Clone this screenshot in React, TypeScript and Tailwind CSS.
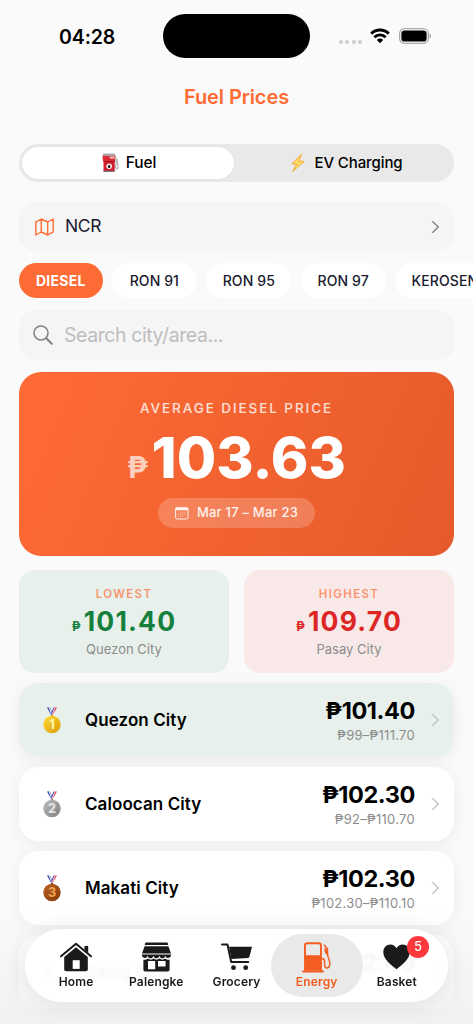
import type { ReactNode } from 'react';

interface City {
  rank: number;
  name: string;
  price: string;
  range: string;
}

const FUELS = ['DIESEL', 'RON 91', 'RON 95', 'RON 97', 'KEROSENE'];

const CITIES: City[] = [
  { rank: 1, name: 'Quezon City', price: '₱101.40', range: '₱99–₱111.70' },
  { rank: 2, name: 'Caloocan City', price: '₱102.30', range: '₱92–₱110.70' },
  { rank: 3, name: 'Makati City', price: '₱102.30', range: '₱102.30–₱110.10' },
  { rank: 4, name: 'Pasig City', price: '₱102.40', range: '' },
];

const MEDALS = [
  { light: '#ffdf3c', dark: '#d89400', digit: '#fff3a8' },
  { light: '#bcbcbc', dark: '#7c7c7c', digit: '#e2e2e2' },
  { light: '#bd6423', dark: '#7c3409', digit: '#f0a050' },
];

const StatusBar = () => (
  <div className="flex h-[72px] shrink-0 items-start">
    <div className="w-[163px] pl-[59px] pt-[23px] text-[19.5px] font-semibold leading-7 tracking-[-0.1px] text-black">
      04:28
    </div>
    <div className="mt-[14px] h-[44px] w-[147px] rounded-full bg-black" />
    <div className="ml-[29px] mt-[28px] flex items-start">
      <div className="mt-[12px] flex gap-[2.3px]">
        {[0, 1, 2, 3].map((dot) => (
          <span key={dot} className="h-1 w-1 rounded-full bg-[#cccccc]" />
        ))}
      </div>
      <svg className="ml-[8px]" width="20" height="16" viewBox="0 0 20 16">
        <g fill="none" stroke="#000" strokeWidth="2.9">
          <path d="M1.2 5.6a12.6 12.6 0 0 1 17.6 0" />
          <path d="M4.4 9.2a8 8 0 0 1 11.2 0" />
        </g>
        <path d="M6.8 11.9a4.7 4.7 0 0 1 6.4 0L10 15.3z" fill="#000" />
      </svg>
      <svg className="ml-[9px]" width="33" height="16" viewBox="0 0 33 16">
        <rect x="0.7" y="0.7" width="28.6" height="14.6" rx="4.6" fill="none" stroke="#999" strokeWidth="1.1" />
        <rect x="2.4" y="2.4" width="25.2" height="11.2" rx="3.2" fill="#000" />
        <path d="M30.6 5.6c1.7.6 1.7 4.2 0 4.8z" fill="#999" />
      </svg>
    </div>
  </div>
);

const FuelEmoji = () => (
  <svg width="17" height="20" viewBox="0 0 17 20">
    <rect x="0.8" y="0.6" width="12.4" height="3" rx="0.8" fill="#a9b0b3" />
    <path d="M0.4 2.8h13.2l-.5 5.2H.9z" fill="#db2c38" />
    <path d="M7.2 3.6h5.3v2H8.2z" fill="#f3c4c7" />
    <path d="M1.5 8h11.2v10.8H1.5z" fill="#d41f2e" />
    <path d="M1.5 8h11.2v1H1.5z" fill="#9f1522" />
    <path d="M1.5 17.8h11.2v1.2H1.5z" fill="#77777b" />
    <circle cx="7.2" cy="13.3" r="2.8" fill="#f8eeee" />
    <path d="M7.2 11.4c.7 1 1.3 1.6 1.3 2.4a1.3 1.3 0 0 1-2.6 0c0-.8.6-1.4 1.3-2.4z" fill="#111" />
    <path d="M13.2 4.2l1.6 1.7c.4 4 1.6 6.8 1.1 9.3-.3 1.5-1.9 1.5-2.3 0-.4-2 1-4.9.3-8.5" fill="none" stroke="#8b9293" strokeWidth="0.9" />
  </svg>
);

const BoltEmoji = () => (
  <svg width="14" height="20" viewBox="0 0 14 20">
    <path d="M10.7 1.2L.8 10.9l5 .3L1.6 18.4 13.2 8.5l-5.4-.4z" fill="#ffd96b" stroke="#f5a623" strokeWidth="0.9" strokeLinejoin="round" />
  </svg>
);

const Medal = ({ rank }: { rank: number }) => {
  const { light, dark, digit } = MEDALS[rank - 1];
  return (
    <svg width="18" height="27" viewBox="0 0 18 27">
      <defs>
        <linearGradient id={`medal-${rank}`} x1="0" y1="0" x2="1" y2="1">
          <stop offset="0" stopColor={light} />
          <stop offset="1" stopColor={dark} />
        </linearGradient>
      </defs>
      <path d="M4 .6h2.9l2.8 5.8-1.4 1.9z" fill="#343eae" />
      <path d="M5.6.6h1.1l2.5 6.4-.7 1z" fill="#f2f2fa" />
      <path d="M14 .6h-2.7L8.5 6.8l.9 1.3z" fill="#e6374b" />
      <path d="M11.5.6h-1L8.2 6.2l.6 1.2z" fill="#444db4" />
      <path d="M12.4.6h-.7L8.9 7l.3.8z" fill="#fff" />
      <circle cx="9" cy="9.3" r="1.4" fill={dark} />
      <circle cx="9" cy="17.5" r="8.7" fill={`url(#medal-${rank})`} />
      <circle cx="9" cy="17.5" r="7.6" fill="none" stroke={light} strokeOpacity="0.45" strokeWidth="0.6" />
      <text x="9" y="22" textAnchor="middle" fontSize="12.5" fontWeight="800" fill={digit}>
        {rank}
      </text>
    </svg>
  );
};

const Chevron = ({ className }: { className: string }) => (
  <svg width="9" height="14" viewBox="0 0 9 14" className={className}>
    <path d="M1.3 1.2L7.3 7l-6 5.8" fill="none" stroke="currentColor" strokeWidth="1.3" />
  </svg>
);

const SourceTabs = () => (
  <div className="flex h-[38px] shrink-0 rounded-full bg-[#e9e9e9] p-[3px] text-[15px] text-black">
    <div className="flex w-[212px] items-center justify-center rounded-full bg-white pl-[2px] shadow-[0_0_3px_rgba(0,0,0,0.06)]">
      <FuelEmoji />
      <span className="ml-[7px] text-[15.5px] font-medium tracking-[-0.1px]">Fuel</span>
    </div>
    <div className="flex flex-1 items-center justify-center pl-[9px]">
      <BoltEmoji />
      <span className="ml-[9px] font-[450] tracking-[-0.1px]">EV Charging</span>
    </div>
  </div>
);

const RegionRow = () => (
  <div className="mt-[20px] flex h-[49px] shrink-0 items-center rounded-[16px] bg-[#f5f5f5] pl-[16px] pr-[14px]">
    <svg width="19" height="18" viewBox="0 0 19 18">
      <path
        d="M.8 4.1L6.3 1l6.4 3 5.5-3v12.9l-5.5 3.1-6.4-3-5.5 3zM6.3 1v13M12.7 4v13"
        fill="none"
        stroke="#ff6b35"
        strokeWidth="1.4"
        strokeLinejoin="round"
      />
    </svg>
    <span className="ml-[11px] flex-1 text-[17.5px] tracking-[-0.4px] text-[#1a1a2e]">NCR</span>
    <Chevron className="text-[#7f7f7f]" />
  </div>
);

const FuelChips = () => (
  <div className="-mr-[19px] mt-[12px] flex shrink-0 gap-[9.5px] overflow-hidden">
    {FUELS.map((fuel, idx) => (
      <div
        key={fuel}
        className={
          idx === 0
            ? 'flex h-[35px] w-[83.5px] shrink-0 items-center justify-center rounded-full bg-[#ff6b35] text-[14px] font-bold tracking-[0.25px] text-white'
            : 'flex h-[35px] min-w-[84.7px] shrink-0 items-center justify-center rounded-full bg-white px-[16.5px] text-[14px] font-medium tracking-[0.1px] text-[#1a1a2e]'
        }
      >
        {fuel}
      </div>
    ))}
  </div>
);

const SearchBox = () => (
  <div className="mt-[12px] flex h-[50px] shrink-0 items-center rounded-[16px] bg-[#f5f5f5] pl-[14px]">
    <svg width="20" height="20" viewBox="0 0 20 20">
      <circle cx="8" cy="8" r="7" fill="none" stroke="#808080" strokeWidth="1.5" />
      <path d="M13 13l5.7 5.7" stroke="#808080" strokeWidth="2" strokeLinecap="round" />
    </svg>
    <span className="ml-[11px] pt-[2px] text-[19.5px] tracking-[-0.42px] text-[#bdbdbd]">Search city/area...</span>
  </div>
);

const AverageCard = () => (
  <div className="mt-[12px] flex h-[184px] shrink-0 flex-col items-center rounded-[22px] bg-linear-[113deg] from-[#ff6b35] to-[#e55a2b] text-white">
    <div className="mt-[26px] text-[13.5px] font-medium leading-5 tracking-[1.92px] text-white/80">AVERAGE DIESEL PRICE</div>
    <div className="mt-[5px] flex h-[70px] items-baseline">
      <span className="mr-[3px] text-[30px] font-bold text-white/70">₱</span>
      <span className="text-[57px] font-extrabold leading-[70px]">103.63</span>
    </div>
    <div className="mt-[5px] flex h-[30px] w-[157px] items-center justify-center rounded-full bg-white/20">
      <svg width="14" height="13" viewBox="0 0 14 13" className="text-white/90">
        <rect x="0.6" y="0.6" width="12.4" height="11.4" rx="1.5" fill="none" stroke="currentColor" />
        <path d="M.8 1h12v2.2H.8z" fill="currentColor" />
        <path d="M5 5.2h6M2.7 7.2H11M2.7 9.2h6" stroke="currentColor" strokeWidth="1" strokeDasharray="1.2 .8" opacity="0.6" />
      </svg>
      <span className="ml-[8px] text-[13px] font-medium tracking-[0.22px] text-white/90">Mar 17 – Mar 23</span>
    </div>
  </div>
);

interface StatProps {
  label: string;
  price: string;
  city: string;
  box: string;
  color: string;
}

const StatCard = ({ label, price, city, box, color }: StatProps) => (
  <div className={`flex h-[103px] flex-1 flex-col items-center rounded-[16px] ${box}`}>
    <div className="mt-[16px] text-[11.5px] font-semibold leading-4 tracking-[1.35px] text-[#ff6b35]/70">{label}</div>
    <div className={`mt-[3px] flex h-[32px] items-baseline font-bold ${color}`}>
      <span className="mr-[3px] text-[12.5px]">₱</span>
      <span className="text-[26.5px] leading-8 tracking-[1.2px]">{price}</span>
    </div>
    <div className="mt-[2px] text-[13px] leading-5 tracking-[0.02px] text-[#8c8c8c]">{city}</div>
  </div>
);

const CityRow = ({ rank, name, price, range }: City) => (
  <div
    className={`flex h-[74px] shrink-0 items-center rounded-[20px] pr-[14px] shadow-[0_4px_18px_rgba(0,0,0,0.06)] ${
      rank === 1 ? 'bg-[#e7f0eb]' : 'bg-white'
    }`}
  >
    <div className="flex w-[66px] justify-center">
      {rank <= 3 ? <Medal rank={rank} /> : <span className="-ml-2 text-[19px] font-bold text-[#888888]">{rank}</span>}
    </div>
    <span className="flex-1 pt-[2px] text-[17px] font-semibold tracking-[0.08px] text-black">{name}</span>
    <div className="pt-[2px] text-right">
      <div className="text-[23.5px] font-bold leading-7 tracking-[-0.4px] text-black">{price}</div>
      <div className="h-5 text-[13px] leading-5 tracking-[0.28px] text-[#8c8c8c]">{range}</div>
    </div>
    <Chevron className="ml-[16px] text-[#c0c0c0]" />
  </div>
);

const HomeIcon = () => (
  <svg width="32" height="30" viewBox="0 0 32 30">
    <path d="M1 14.3L16 1.7l15 12.6" fill="none" stroke="#1a1a1a" strokeWidth="2" strokeLinecap="round" strokeLinejoin="round" />
    <path d="M24.5 4h3.7v7l-3.7-3z" fill="#1a1a1a" />
    <path d="M16 5.2l11.8 9.9v12.2a2 2 0 0 1-2 2H6.2a2 2 0 0 1-2-2V15.1z" fill="#1a1a1a" />
    <path d="M12.7 18.2h7v8.7h-7z" fill="#fff" />
  </svg>
);

const StoreIcon = () => (
  <svg width="31" height="30" viewBox="0 0 31 30">
    <path d="M5.5.5h20c.8 0 1.4.5 1.5 1.2l.2 1.4H3.8L4 1.7C4.1 1 4.7.5 5.5.5z" fill="#1a1a1a" />
    <path d="M3.6 4.3h23.8l2.6 7.2H1z" fill="#1a1a1a" />
    <path d="M.8 12.6h29.4c0 4-5.3 4.6-5.9 1.2-.8 3.4-5.2 3.4-5.9 0-.8 3.4-5.1 3.4-5.9 0-.8 3.4-5.2 3.4-5.9 0C5.9 17.2.8 16.6.8 12.6z" fill="#1a1a1a" />
    <path d="M2.4 17.7c2 .3 3.3-.2 4.4-1.2 1.7 1.5 4.2 1.5 5.8 0 1.7 1.5 4.2 1.5 5.8 0 1.7 1.5 4.2 1.5 5.8 0 1.1 1 2.4 1.5 4.4 1.2v10a1.8 1.8 0 0 1-1.8 1.8H4.2a1.8 1.8 0 0 1-1.8-1.8z" fill="#1a1a1a" />
    <path d="M7 19h7.2v8.2H7zM17 19h7.6v5.4H17z" fill="#fff" />
  </svg>
);

const CartIcon = () => (
  <svg width="32" height="28" viewBox="0 0 32 28">
    <path d="M1 1.5h5.5l3.7 17.6h17" fill="none" stroke="#1a1a1a" strokeWidth="2" strokeLinecap="round" strokeLinejoin="round" />
    <path d="M8 3.8h23l-2.6 9.9c-.2.7-.7 1.1-1.4 1.2L10.3 16z" fill="#1a1a1a" />
    <circle cx="12.5" cy="24.7" r="2.4" fill="#1a1a1a" />
    <circle cx="24.7" cy="24.7" r="2.4" fill="#1a1a1a" />
  </svg>
);

const PumpIcon = () => (
  <svg width="29" height="31" viewBox="0 0 29 31">
    <g fill="none" stroke="#f45d22" strokeLinecap="round" strokeLinejoin="round">
      <path d="M3 29V3.5C3 2 3.9 1.2 5.3 1.2h11.4c1.4 0 2.3.8 2.3 2.3V29" strokeWidth="1.9" />
      <path d="M1 29.5h20" strokeWidth="1.9" />
      <path d="M22.5 3.2l3 3.8v5c0 3 2.3 5.3 2.3 9.5 0 5.5-5.2 5.8-5.2 1.5v-4c0-2-1.3-2.6-3.3-2.6" strokeWidth="1.5" />
    </g>
    <path d="M3.5 13.2h15v15.500h-15z" fill="#f45d22" />
    <path d="M22.5 5.8l3 2v5c-1.8-.6-3-2-3-3.5z" fill="#f45d22" />
  </svg>
);

const HeartIcon = () => (
  <svg width="27" height="26" viewBox="0 0 27 26">
    <path d="M13.5 25.3C8 20.5.3 15.3.3 8.2.3 3.7 3.5.6 7.3.6c2.7 0 4.9 1.4 6.2 3.7C14.8 2 17 .6 19.7.6c3.8 0 7 3.1 7 7.6 0 7.1-7.7 12.3-13.2 17.1z" fill="#1a1a1a" />
  </svg>
);

interface TabProps {
  label: string;
  active?: boolean;
  badge?: number;
  children: ReactNode;
}

const Tab = ({ label, active, badge, children }: TabProps) => (
  <div
    className={`relative flex h-[63px] w-[80.2px] flex-col items-center text-[12px] font-semibold tracking-[0.15px] ${
      active ? 'text-[#f45d22]' : 'text-[#1a1a1a]'
    }`}
  >
    {active && <div className="absolute -inset-x-[6px] inset-y-0 rounded-full bg-[#e9e9e9]" />}
    <div className="relative flex h-[46px] items-center justify-center">{children}</div>
    <span className="relative -mt-[6px] leading-4">{label}</span>
    {badge && (
      <span className="absolute right-[8px] top-[2px] flex h-[22px] w-[22px] items-center justify-center rounded-full bg-[#ff383c] text-[13px] font-medium text-white">
        {badge}
      </span>
    )}
  </div>
);

const TabBar = () => (
  <nav className="absolute left-[25px] top-[929px] flex h-[73px] w-[423px] items-center justify-center rounded-full border border-white bg-white/94 shadow-[0_4px_24px_rgba(0,0,0,0.08)] backdrop-blur-[1.5px]">
    <Tab label="Home"><HomeIcon /></Tab>
    <Tab label="Palengke"><StoreIcon /></Tab>
    <Tab label="Grocery"><CartIcon /></Tab>
    <Tab label="Energy" active><PumpIcon /></Tab>
    <Tab label="Basket" badge={5}><HeartIcon /></Tab>
  </nav>
);

const App = () => {
  return (
    <div className="relative flex h-[1024px] w-[473px] flex-col overflow-hidden bg-[#fafafa] font-['Inter','Liberation_Sans',sans-serif] whitespace-nowrap">
      <StatusBar />
      <h1 className="h-[72px] shrink-0 pt-[10px] text-center text-[20px] font-semibold leading-[30px] tracking-[-0.1px] text-[#ff6b35]">
        Fuel Prices
      </h1>
      <main className="flex flex-col px-[19px]">
        <SourceTabs />
        <RegionRow />
        <FuelChips />
        <SearchBox />
        <AverageCard />
        <div className="mt-[14px] flex shrink-0 gap-[15px]">
          <StatCard label="LOWEST" price="101.40" city="Quezon City" box="bg-[#e7f0eb]" color="text-[#15803d]" />
          <StatCard label="HIGHEST" price="109.70" city="Pasay City" box="bg-[#f8e9e8]" color="text-[#dc2626]" />
        </div>
        <div className="mt-[10px] flex flex-col gap-[10px]">
          {CITIES.map((city) => (
            <CityRow key={city.rank} {...city} />
          ))}
        </div>
      </main>
      <div className="absolute inset-x-0 bottom-0 h-[120px] bg-linear-to-b from-[#f0f0f0]/0 to-[#f0f0f0]/80" />
      <TabBar />
    </div>
  );
};

export default App;
